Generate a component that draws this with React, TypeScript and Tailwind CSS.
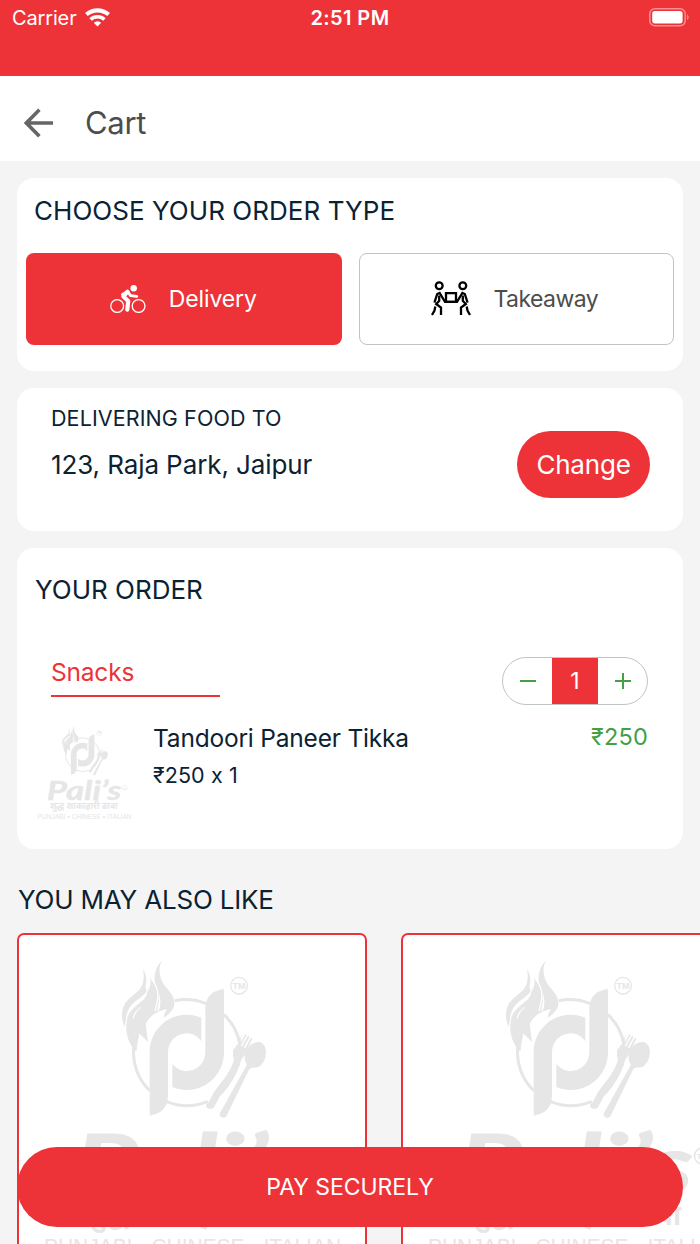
import React from 'react';

const PalisLogo: React.FC<{ className?: string }> = ({ className }) => (
  <svg viewBox="40 958 302 298" className={className} fill="#e6e6e6" aria-label="Pali's">
    <g transform="translate(100 950) scale(.33333)">
      {/* flame */}
      <path d="M187 30C172 44 163 65 164 88C165 113 176 123 180 143C183 161 180 177 173 188C171 169 179 157 177 137C175 117 163 95 150 82C154 105 150 119 134 132C112 151 88 169 82 190C77 203 78 216 73 230C64 208 63 183 73 164C85 140 118 128 127 104C132 91 132 73 129 57C141 76 141 96 136 111C149 133 130 148 112 164C96 178 82 190 80 215C75 245 83 274 105 304L110 302C110 288 110 274 118 250L144 275C136 254 134 237 137 220C147 204 158 193 174 187C187 179 196 177 201 179C195 184 192 193 191 203C213 190 226 170 223 155C221 126 191 114 182 83C176 62 178 45 187 30Z" />
      <path d="M149 80C162 98 169 112 171 132C172 150 165 160 163 178L152 196L137 222L144 275L118 250L108 302C82 265 76 230 85 200C92 184 105 177 120 173C109 182 103 194 101 208C108 188 127 175 140 163C159 147 164 119 149 80Z" />
      <path d="M140 110C144 127 130 138 115 148C97 160 85 174 80 193C89 177 102 168 116 160C132 150 147 135 140 110Z" fill="#fff" />
      <path d="M152 84C164 98 173 115 174 134C175 152 167 163 166 184" fill="none" stroke="#fff" strokeWidth="4" />
      <path d="M122 172C109 182 102 190 99 206C104 192 112 180 122 172Z" fill="#fff" stroke="#fff" strokeWidth="2" />
      {/* plate */}
      <path d="M224 152A158 158 0 0 1 319 161M372 194A158 158 0 0 1 420 285M101 292A160 160 0 0 0 149 422M200 455A160 160 0 0 0 323 454" fill="none" stroke="#e6e6e6" strokeWidth="9" />
      {/* monogram */}
      <path d="M304 274C293 259 279 250 260 250C229 250 204 275 204 306V436C204 473 183 492 149 497V306C149 244 199 194 260 194C276 194 291 197 304 203Z" />
      <path d="M372 117V307C372 370 322 420 261 420C245 420 230 417 217 411V342C229 355 242 363 260 363C292 363 316 338 316 307V174C318 139 337 121 372 117Z" />
      {/* cutlery */}
      <path d="M426 251L413 283L399 301C398 315 400 323 402 329C394 361 369 390 342 426L326 457C317 461 317 470 322 474C330 479 339 478 342 472L360 438C386 414 406 379 420 344C422 327 431 322 437 310L457 266L453 264L435 295L431 293L449 260L444 258L426 289L422 287L440 255L436 253L418 286Z" />
      <path d="M477 276C455 274 437 294 434 321C433 333 440 339 440 346L360 489C355 500 371 509 379 499L447 359C453 350 465 354 475 351C492 342 500 319 497 298C495 285 487 277 477 276Z" />
      <circle cx="417" cy="107" r="25" fill="none" stroke="#e6e6e6" strokeWidth="4" />
      <text x="417" y="117" textAnchor="middle" fontFamily="Liberation Sans" fontWeight="700" fontSize="27">TM</text>
    </g>
    <text x="74" y="1195" textLength="235" lengthAdjust="spacingAndGlyphs" fontFamily="Lato, sans-serif" fontStyle="italic" fontWeight="700" fontSize="84" stroke="#e6e6e6" strokeWidth="1">Pali’s</text>
    <circle cx="318.5" cy="1156" r="8" fill="none" stroke="#e6e6e6" strokeWidth="1.5" />
    <text x="318.5" y="1159" textAnchor="middle" fontFamily="Liberation Sans" fontWeight="700" fontSize="8">TM</text>
    <text x="84" y="1225" textLength="213" lengthAdjust="spacingAndGlyphs" fontFamily="Noto Sans Devanagari, Lohit Devanagari, sans-serif" fontWeight="700" fontSize="29">शुद्ध शाकाहारी ढाबा</text>
    <text x="44" y="1254" textLength="297" lengthAdjust="spacingAndGlyphs" fontFamily="Liberation Sans" fontSize="22">PUNJABI • CHINESE • ITALIAN</text>
  </svg>
);

const WifiIcon: React.FC = () => (
  <svg viewBox="0 0 26 20" className="w-[26px] h-5" fill="none" stroke="#fff">
    <path d="M1.4 6.6A16.6 16.6 0 0 1 23.6 6.6" strokeWidth="4.1" />
    <path d="M5.6 11.5A10 10 0 0 1 19.4 11.5" strokeWidth="3.6" />
    <path d="M12.5 18.5L8.8 14.8Q12.5 11.8 16.2 14.8Z" fill="#fff" stroke="none" />
  </svg>
);

const BatteryIcon: React.FC = () => (
  <svg viewBox="0 0 41 20" className="w-[41px] h-5">
    <rect x=".8" y=".8" width="35.4" height="17" rx="5" fill="none" stroke="#fff" strokeOpacity=".45" strokeWidth="1.5" />
    <rect x="3.2" y="3" width="30.4" height="12.4" rx="2.6" fill="#fff" />
    <path d="M38.2 6.2Q41 9.2 38.2 12.2Z" fill="#fff" fillOpacity=".5" />
  </svg>
);

const BikeIcon: React.FC = () => (
  <svg viewBox="0 0 36 28" className="w-9 h-7" fill="none" stroke="#fff">
    <circle cx="7.2" cy="21" r="6.4" strokeWidth="1.3" />
    <circle cx="28.6" cy="21" r="6.4" strokeWidth="1.3" />
    <circle cx="23.7" cy="3.3" r="3.2" fill="#fff" stroke="none" />
    <path d="M12.4 9.5L17.5 6.4L20.6 10.6L26.8 11.3" strokeWidth="2.8" strokeLinecap="round" strokeLinejoin="round" />
    <path d="M17.5 6.8L13.4 11.4L18.2 16L17.3 24.6" strokeWidth="4.2" strokeLinecap="round" strokeLinejoin="round" />
  </svg>
);

const TakeawayIcon: React.FC = () => (
  <svg viewBox="0 0 40 35" className="w-10 h-[35px]" fill="none" stroke="#000" strokeWidth="2.3">
    <circle cx="8.2" cy="4.7" r="3.4" />
    <circle cx="31.8" cy="4.7" r="3.4" />
    <path d="M15 12.2H25V20.8H15Z" />
    <path d="M3.4 21.6L6.2 13L8.6 12L14 20.8H26L31.4 12L33.8 13L36.6 21.6" />
    <path d="M8.2 14.5V19.8L5.2 23L10 26.6V34M31.8 14.5V19.8L34.8 23L30 26.6V34M4.3 25.5L3.5 29.5L1 34M35.7 25.5L36.5 29.5L39 34" />
  </svg>
);

const productos = [1, 2];

const App: React.FC = () => {
  return (
    <div className="relative w-[700px] h-[1244px] overflow-hidden bg-[#f4f4f4] font-['Inter',sans-serif] [font-feature-settings:'calt'_0] text-[#0b2233]">
      <div className="h-[76px] bg-[#ee3338] text-white grid grid-cols-3 items-start px-[10px] pt-2 text-[20px] leading-5">
        <div className="flex items-center gap-[9px] pl-0.5">
          <span className="w-16 whitespace-nowrap tracking-[-0.15px]">Carrier</span>
          <WifiIcon />
        </div>
        <span className="text-center font-semibold tracking-[0.4px]">2:51 PM</span>
        <div className="flex justify-end"><BatteryIcon /></div>
      </div>

      <header className="h-[85px] bg-white flex items-center pl-6 pt-[9px] text-[#4d4d4d]">
        <svg viewBox="0 0 30 30" className="w-[30px] h-[30px] mr-[31px]" fill="none" stroke="#666" strokeWidth="3.6">
          <path d="M29 15H3M15.4 1.8L2.4 15L15.4 28.2" />
        </svg>
        <h1 className="text-[31px] tracking-[-0.3px]">Cart</h1>
      </header>

      <main className="px-[17px] pt-[17px]">
        <section className="h-[193px] rounded-[17px] bg-white px-[9px] pt-[15px]">
          <h2 className="pl-2 text-[26px] leading-9 tracking-[0.05px]">CHOOSE YOUR ORDER TYPE</h2>
          <div className="mt-[23.5px] grid grid-cols-2 gap-[17px] text-[23px]">
            <button className="h-[92.5px] rounded-[8px] bg-[#ee3338] text-white flex items-center justify-center gap-[23px] pr-px">
              <BikeIcon />
              <span className="tracking-[-0.1px]">Delivery</span>
            </button>
            <button className="h-[92.5px] rounded-[8px] border-[1.5px] border-[#bfc4c4] text-[#4d4d4d] flex items-center justify-center gap-[22px] pr-[3px]">
              <TakeawayIcon />
              <span className="tracking-[-0.55px]">Takeaway</span>
            </button>
          </div>
        </section>

        <section className="mt-[17px] h-[143px] rounded-[17px] bg-white pl-[34px] pr-[33px] flex justify-between">
          <div className="pt-4">
            <h3 className="text-[21.5px] leading-7 tracking-[0.1px]">DELIVERING FOOD TO</h3>
            <p className="mt-[15px] text-[26px] leading-9 tracking-[-0.1px]">123, Raja Park, Jaipur</p>
          </div>
          <button className="mt-[43px] h-[67px] w-[133px] rounded-full bg-[#ee3338] text-white text-[26px] tracking-[-0.2px]">Change</button>
        </section>

        <section className="mt-[17px] h-[301px] rounded-[17px] bg-white pt-6 px-[18px]">
          <h2 className="text-[26px] leading-9">YOUR ORDER</h2>
          <div className="mt-[49px] flex justify-between pl-4 pr-[17px]">
            <div className="h-10 w-[169px] border-b-2 border-[#ee3338] text-[#ee3338] text-[24.5px] leading-[31px] tracking-[-0.2px]">Snacks</div>
            <div className="h-[48px] w-[146px] rounded-full border-[1.5px] border-[#bfc4c4] text-[#43a047] flex overflow-hidden">
              <span className="flex-1 flex items-center justify-center">
                <svg viewBox="0 0 16 16" className="w-4 h-4" stroke="currentColor" strokeWidth="2.2"><path d="M0 8H16" /></svg>
              </span>
              <span className="w-[46px] bg-[#ee3338] text-white text-[23px] flex items-center justify-center">1</span>
              <span className="flex-1 flex items-center justify-center">
                <svg viewBox="0 0 16 16" className="w-4 h-4" stroke="currentColor" strokeWidth="2"><path d="M0 8H16M8 0V16" /></svg>
              </span>
            </div>
          </div>
          <div className="mt-[15px] flex pr-[17px]">
            <PalisLogo className="ml-px mt-1 w-[96px] h-[96px]" />
            <div className="ml-[21px] flex-1">
              <p className="text-[24.5px] leading-9 tracking-[-0.2px]">Tandoori Paneer Tikka</p>
              <p className="mt-[5px] text-[21.5px] leading-7 tracking-[0.1px]">₹250 x 1</p>
            </div>
            <span className="text-[23.5px] leading-[34px] tracking-[0.2px] text-[#43a047]">₹250</span>
          </div>
        </section>

        <h2 className="mt-[33px] pl-px text-[26px] leading-9 tracking-[-0.2px]">YOU MAY ALSO LIKE</h2>
        <div className="mt-[15px] flex gap-[34px]">
          {productos.map((id) => (
            <article key={id} className="w-[350px] h-[400px] shrink-0 rounded-[7px] border-2 border-[#ee3338] bg-white">
              <PalisLogo className="ml-[20.5px] mt-[23px] w-[302px] h-[298px]" />
            </article>
          ))}
        </div>
      </main>

      <button className="absolute left-[17px] top-[1147px] h-20 w-[666px] rounded-full bg-[#ee3338] text-white text-[23px] tracking-[-0.05px]">
        PAY SECURELY
      </button>
    </div>
  );
};

export default App;
